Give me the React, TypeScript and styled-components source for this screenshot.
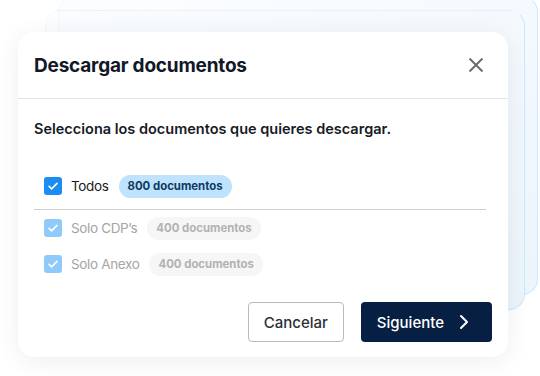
import React from 'react';
import styled, { createGlobalStyle } from 'styled-components';

const GlobalStyle = createGlobalStyle`
  html, body {
    margin: 0;
    padding: 0;
    background: #ffffff;
    font-family: Inter, "Noto Sans", sans-serif;
  }
`;

const Stage = styled.div`
  position: relative;
  width: 540px;
  height: 376px;
  overflow: hidden;
  padding: 32px 0 0 18px;
  box-sizing: border-box;
`;

// stacked sheets behind the dialog
const BackSheet = styled.div<{ $top: number; $left: number; $w: number; $h: number; $z: number }>`
  position: absolute;
  top: ${(p) => p.$top}px;
  left: ${(p) => p.$left}px;
  width: ${(p) => p.$w}px;
  height: ${(p) => p.$h}px;
  border-radius: 16px;
  border: 1px solid rgba(200, 228, 250, 0.15);
  border-right-color: #cde7fb;
  border-bottom-color: #cde7fb;
  background: linear-gradient(165deg, rgba(250, 252, 255, 0.5) 0%, #f2f8fd 45%, #ecf5fc 100%);
  z-index: ${(p) => p.$z};
`;

const Dialog = styled.div`
  position: relative;
  z-index: 3;
  width: 490px;
  height: 325px;
  background: #ffffff;
  border-radius: 16px;
  box-shadow: 0 4px 24px rgba(0, 0, 0, 0.07);
  display: flex;
  flex-direction: column;
`;

const Header = styled.div`
  height: 67px;
  display: flex;
  align-items: center;
  justify-content: space-between;
  padding: 0 23px 0 16px;
  border-bottom: 1px solid #e4e4e4;
  box-sizing: border-box;
`;

const Title = styled.h2`
  margin: 0;
  font-size: 19px;
  font-weight: 700;
  color: #111827;
  letter-spacing: -0.2px;
`;

const CloseButton = styled.button`
  border: none;
  background: none;
  padding: 0;
  width: 18px;
  height: 18px;
  display: flex;
  align-items: center;
  justify-content: center;
  color: #6b6b6b;
  cursor: pointer;
`;

const Body = styled.div`
  flex: 1;
  display: flex;
  flex-direction: column;
  padding: 0 16px 15px 16px;
`;

const Lead = styled.p`
  margin: 20px 0 0 0;
  font-size: 14.5px;
  line-height: 20px;
  font-weight: 600;
  color: #161b26;
`;

const OptionList = styled.div`
  display: flex;
  flex-direction: column;
  margin-top: 29px;
`;

const Row = styled.label`
  display: flex;
  align-items: center;
  height: 36px;
  padding-left: 10px;
  gap: 9px;
`;

const Box = styled.span<{ $muted?: boolean }>`
  width: 18px;
  height: 18px;
  border-radius: 3px;
  background: ${(p) => (p.$muted ? '#8fcafb' : '#1b8cf2')};
  display: flex;
  align-items: center;
  justify-content: center;
  flex-shrink: 0;
`;

const Label = styled.span<{ $muted?: boolean }>`
  font-size: 13.5px;
  letter-spacing: -0.35px;
  color: ${(p) => (p.$muted ? '#a4a4a4' : '#1a1a1a')};
`;

const Badge = styled.span<{ $muted?: boolean }>`
  margin-left: 1px;
  height: 23px;
  padding: 0 9px;
  border-radius: 12px;
  display: flex;
  align-items: center;
  font-size: 11.4px;
  font-weight: 700;
  background: ${(p) => (p.$muted ? '#f6f6f6' : '#bfe3fd')};
  color: ${(p) => (p.$muted ? '#b2b2b2' : '#0d3b63')};
`;

const Rule = styled.hr`
  margin: 5px 6px 0 0;
  border: none;
  border-top: 1px solid #cfcfcf;
`;

const Footer = styled.div`
  margin-top: auto;
  display: flex;
  justify-content: flex-end;
  gap: 17px;
`;

const Button = styled.button<{ $primary?: boolean }>`
  height: 40px;
  border-radius: 4px;
  font-family: inherit;
  font-size: 15px;
  font-weight: 500;
  display: flex;
  align-items: center;
  gap: 15px;
  cursor: pointer;
  padding: ${(p) => (p.$primary ? '0 23px 0 16px' : '0 15px')};
  border: ${(p) => (p.$primary ? 'none' : '1px solid #b9b9b9')};
  background: ${(p) => (p.$primary ? '#071f42' : '#ffffff')};
  color: ${(p) => (p.$primary ? '#ffffff' : '#2b2f36')};
`;

function Check() {
  return (
    <svg width="12" height="12" viewBox="0 0 12 12" fill="none">
      <path d="M2 6.3l2.6 2.6L10 3.4" stroke="#fff" strokeWidth="1.6" strokeLinecap="round" strokeLinejoin="round" />
    </svg>
  );
}

const options = [
  { label: 'Todos', count: '800 documentos', muted: false },
  { label: 'Solo CDP’s', count: '400 documentos', muted: true },
  { label: 'Solo Anexo', count: '400 documentos', muted: true },
];

export default function App() {
  return (
    <>
      <GlobalStyle />
      <Stage>
        <BackSheet $top={-4} $left={58} $w={478} $h={297} $z={1} />
        <BackSheet $top={10} $left={45} $w={478} $h={298} $z={2} />
        <Dialog>
          <Header>
            <Title>Descargar documentos</Title>
            <CloseButton aria-label="Cerrar">
              <svg width="16" height="16" viewBox="0 0 16 16" fill="none">
                <path d="M1.5 1.5l13 13M14.5 1.5l-13 13" stroke="currentColor" strokeWidth="1.9" />
              </svg>
            </CloseButton>
          </Header>
          <Body>
            <Lead>Selecciona los documentos que quieres descargar.</Lead>
            <OptionList>
              {options.map((o, i) => (
                <React.Fragment key={o.label}>
                  <Row>
                    <Box $muted={o.muted}>
                      <Check />
                    </Box>
                    <Label $muted={o.muted}>{o.label}</Label>
                    <Badge $muted={o.muted}>{o.count}</Badge>
                  </Row>
                  {i === 0 && <Rule />}
                </React.Fragment>
              ))}
            </OptionList>
            <Footer>
              <Button>Cancelar</Button>
              <Button $primary>
                Siguiente
                <svg width="10" height="16" viewBox="0 0 10 16" fill="none">
                  <path d="M2 2l6 6-6 6" stroke="#fff" strokeWidth="2" strokeLinecap="round" strokeLinejoin="round" />
                </svg>
              </Button>
            </Footer>
          </Body>
        </Dialog>
      </Stage>
    </>
  );
}
